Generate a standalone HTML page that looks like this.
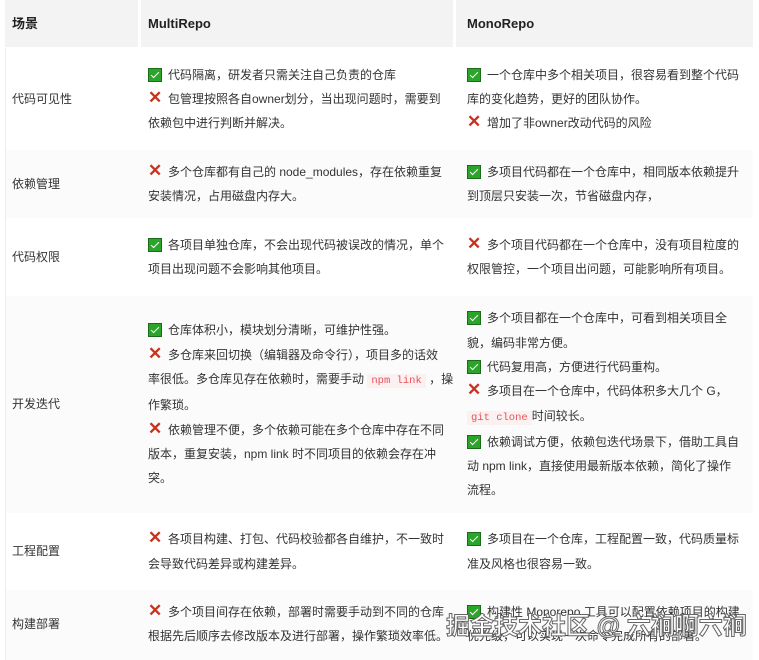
<!DOCTYPE html>
<html><head><meta charset="utf-8"><style>
body{margin:0;width:759px;height:660px;overflow:hidden;background:#fff;font-family:"Liberation Sans","Noto Sans CJK SC",sans-serif;font-size:12px;color:#333;position:relative}
.bg{position:absolute;left:5px;width:748px}
.c{position:absolute;display:flex;flex-direction:column;justify-content:center;line-height:24.3px}
.h{position:absolute;top:0;height:47px;background:#f3f3f3;font-weight:bold;font-size:13px;line-height:47px;color:#222}
.ok{display:inline-block;width:14px;height:14px;background:#2aa52a;border:1px solid #1a6b1a;vertical-align:-3px;margin-right:6px;position:relative;box-sizing:border-box}
.ok:after{content:"";position:absolute;left:4px;top:1px;width:3px;height:7px;border:solid #fff;border-width:0 1.5px 1.5px 0;transform:rotate(45deg)}
.no{display:inline-block;color:#c8321e;font-weight:bold;font-size:17px;width:14px;margin-right:6px;line-height:10px}
code{font-family:"Liberation Mono",monospace;font-size:10.5px;color:#e8505b;background:#fbf1f1;padding:1px 4px}
.wm{position:absolute;left:446px;top:606px;font-size:24px;color:#fff;-webkit-text-stroke:1px #666;font-family:"Liberation Sans","Noto Sans CJK SC",sans-serif;font-weight:bold}
</style></head><body>
<div class="h" style="left:5px;width:133px;padding-left:7px;box-sizing:border-box">场景</div>
<div class="h" style="left:141px;width:312px;padding-left:7px;box-sizing:border-box">MultiRepo</div>
<div class="h" style="left:456px;width:297px;padding-left:11px;box-sizing:border-box">MonoRepo</div>

<div class="bg" style="top:150px;height:68px;background:#fbfbfc"></div>
<div class="bg" style="top:296px;height:217px;background:#fbfbfc"></div>
<div class="bg" style="top:590px;height:70px;background:#fbfbfc"></div>
<div style="position:absolute;left:5px;top:48px;width:1px;height:612px;background:#eee"></div>

<div class="c" style="left:12px;top:48px;height:102px">代码可见性</div>
<div class="c" style="left:148px;top:48px;height:102px"><div><span class="ok"></span>代码隔离，研发者只需关注自己负责的仓库</div><div><span class="no">✕</span>包管理按照各自owner划分，当出现问题时，需要到<br>依赖包中进行判断并解决。</div></div>
<div class="c" style="left:467px;top:48px;height:102px"><div><span class="ok"></span>一个仓库中多个相关项目，很容易看到整个代码<br>库的变化趋势，更好的团队协作。</div><div><span class="no">✕</span>增加了非owner改动代码的风险</div></div>

<div class="c" style="left:12px;top:150px;height:68px">依赖管理</div>
<div class="c" style="left:148px;top:150px;height:68px"><div><span class="no">✕</span>多个仓库都有自己的 node_modules，存在依赖重复<br>安装情况，占用磁盘内存大。</div></div>
<div class="c" style="left:467px;top:150px;height:68px"><div><span class="ok"></span>多项目代码都在一个仓库中，相同版本依赖提升<br>到顶层只安装一次，节省磁盘内存，</div></div>

<div class="c" style="left:12px;top:218px;height:78px">代码权限</div>
<div class="c" style="left:148px;top:218px;height:78px"><div><span class="ok"></span>各项目单独仓库，不会出现代码被误改的情况，单个<br>项目出现问题不会影响其他项目。</div></div>
<div class="c" style="left:467px;top:218px;height:78px"><div><span class="no">✕</span>多个项目代码都在一个仓库中，没有项目粒度的<br>权限管控，一个项目出问题，可能影响所有项目。</div></div>

<div class="c" style="left:12px;top:296px;height:217px">开发迭代</div>
<div class="c" style="left:148px;top:296px;height:217px"><div><span class="ok"></span>仓库体积小，模块划分清晰，可维护性强。</div><div><span class="no">✕</span>多仓库来回切换（编辑器及命令行），项目多的话效<br>率很低。多仓库见存在依赖时，需要手动 <code>npm link</code> ，操<br>作繁琐。</div><div><span class="no">✕</span>依赖管理不便，多个依赖可能在多个仓库中存在不同<br>版本，重复安装，npm link 时不同项目的依赖会存在冲<br>突。</div></div>
<div class="c" style="left:467px;top:296px;height:217px"><div><span class="ok"></span>多个项目都在一个仓库中，可看到相关项目全<br>貌，编码非常方便。</div><div><span class="ok"></span>代码复用高，方便进行代码重构。</div><div><span class="no">✕</span>多项目在一个仓库中，代码体积多大几个 G，<br><code>git clone</code>时间较长。</div><div><span class="ok"></span>依赖调试方便，依赖包迭代场景下，借助工具自<br>动 npm link，直接使用最新版本依赖，简化了操作<br>流程。</div></div>

<div class="c" style="left:12px;top:513px;height:77px">工程配置</div>
<div class="c" style="left:148px;top:513px;height:77px"><div><span class="no">✕</span>各项目构建、打包、代码校验都各自维护，不一致时<br>会导致代码差异或构建差异。</div></div>
<div class="c" style="left:467px;top:513px;height:77px"><div><span class="ok"></span>多项目在一个仓库，工程配置一致，代码质量标<br>准及风格也很容易一致。</div></div>

<div class="c" style="left:12px;top:590px;height:68px">构建部署</div>
<div class="c" style="left:148px;top:590px;height:68px"><div><span class="no">✕</span>多个项目间存在依赖，部署时需要手动到不同的仓库<br>根据先后顺序去修改版本及进行部署，操作繁琐效率低。</div></div>
<div class="c" style="left:467px;top:590px;height:68px"><div><span class="ok"></span>构建性 Monorepo 工具可以配置依赖项目的构建<br>优先级，可以实现一次命令完成所有的部署。</div></div>

<div class="wm">掘金技术社区 @ 六裥啊六裥</div>
</body></html>
